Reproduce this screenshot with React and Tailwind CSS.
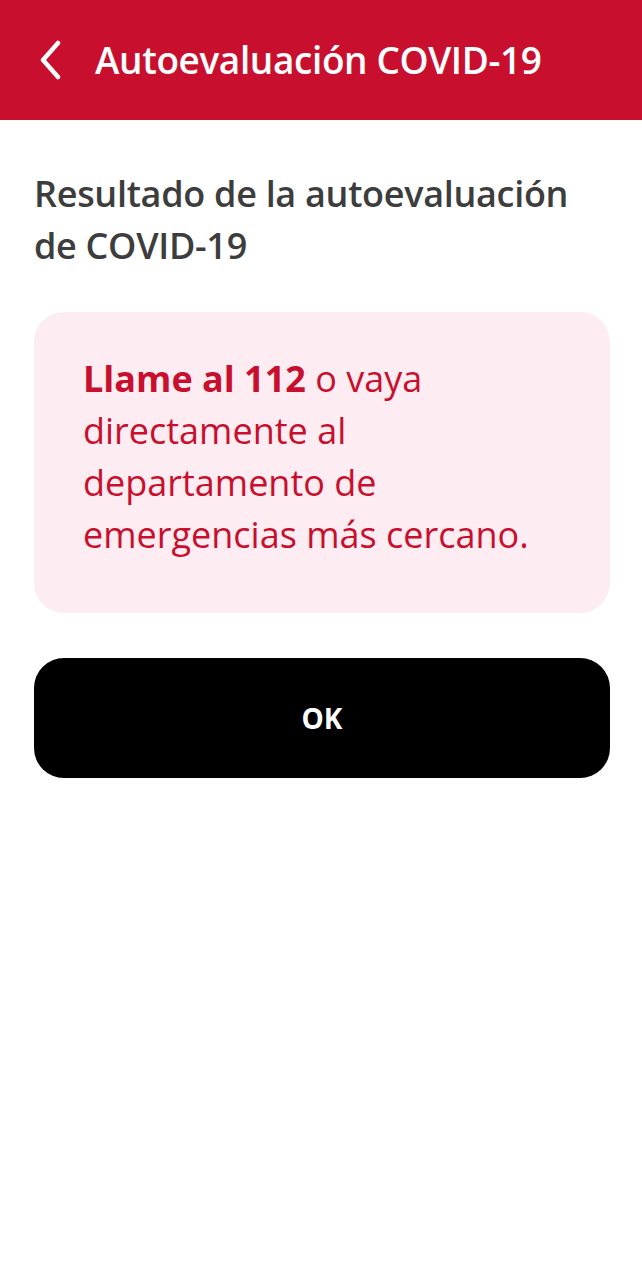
export default function App() {
  return (
    <div className="min-h-[1280px] w-full bg-white font-['Open_Sans',sans-serif]">
      <header className="flex h-[120px] items-center bg-[#c8102e] pl-[38px]">
        <button type="button" aria-label="Volver" className="flex h-[40px] w-[26px] items-center">
          <svg width="24" height="40" viewBox="0 0 24 40" fill="none">
            <path d="M20 3 L5 20 L20 37" stroke="white" strokeWidth="4.5" strokeLinecap="round" strokeLinejoin="round" />
          </svg>
        </button>
        <h1 className="ml-[31px] text-[37px] font-semibold tracking-[-0.4px] text-white">
          Autoevaluación COVID-19
        </h1>
      </header>

      <main className="pl-[34px] pr-[32px]">
        <h2 className="mt-[48px] text-[36px] font-semibold leading-[52px] tracking-[-0.3px] text-[#3d3d3d]">
          Resultado de la autoevaluación de COVID-19
        </h2>

        <div className="mt-[40px] rounded-[30px] bg-[#fdedf2] pb-[52px] pl-[49px] pr-[40px] pt-[41px]">
          <p className="max-w-[470px] text-[36px] leading-[52px] text-[#c8102e]">
            <strong className="font-bold">Llame al 112</strong> o vaya directamente al departamento de emergencias más cercano.
          </p>
        </div>

        <button
          type="button"
          className="mt-[45px] flex h-[120px] w-full items-center justify-center rounded-[30px] bg-black text-[28px] font-bold text-white"
        >
          OK
        </button>
      </main>
    </div>
  );
}
